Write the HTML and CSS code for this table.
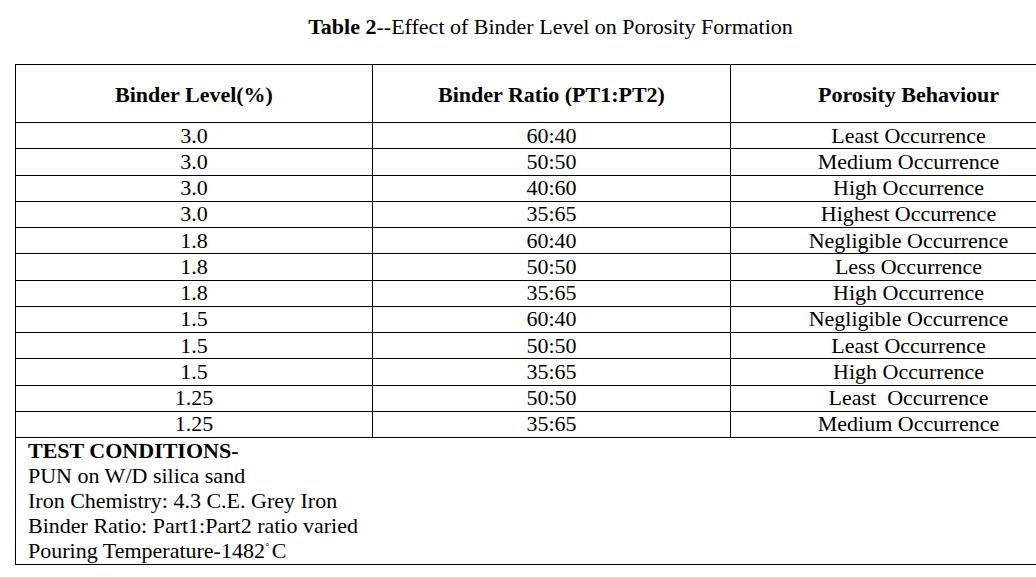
FILE: index.html
```html
<!DOCTYPE html>
<html>
<head>
<meta charset="utf-8">
<link rel="stylesheet" href="styles.css">
</head>
<body>
<div class="page">
  <h1 class="title"><b>Table 2</b>--Effect of Binder Level on Porosity Formation</h1>
  <table class="data">
    <colgroup><col class="c1"><col class="c2"><col class="c3"></colgroup>
    <thead>
      <tr class="head"><th>Binder Level(%)</th><th>Binder Ratio (PT1:PT2)</th><th>Porosity Behaviour</th></tr>
    </thead>
    <tbody>
      <tr><td>3.0</td><td>60:40</td><td>Least Occurrence</td></tr>
      <tr><td>3.0</td><td>50:50</td><td>Medium Occurrence</td></tr>
      <tr><td>3.0</td><td>40:60</td><td>High Occurrence</td></tr>
      <tr><td>3.0</td><td>35:65</td><td>Highest Occurrence</td></tr>
      <tr><td>1.8</td><td>60:40</td><td>Negligible Occurrence</td></tr>
      <tr><td>1.8</td><td>50:50</td><td>Less Occurrence</td></tr>
      <tr><td>1.8</td><td>35:65</td><td>High Occurrence</td></tr>
      <tr><td>1.5</td><td>60:40</td><td>Negligible Occurrence</td></tr>
      <tr><td>1.5</td><td>50:50</td><td>Least Occurrence</td></tr>
      <tr><td>1.5</td><td>35:65</td><td>High Occurrence</td></tr>
      <tr><td>1.25</td><td>50:50</td><td>Least&nbsp; Occurrence</td></tr>
      <tr><td>1.25</td><td>35:65</td><td>Medium Occurrence</td></tr>
      <tr class="cond">
        <td colspan="3">
          <div class="cond-title">TEST CONDITIONS-</div>
          <div>PUN on W/D silica sand</div>
          <div>Iron Chemistry: 4.3 C.E. Grey Iron</div>
          <div>Binder Ratio: Part1:Part2 ratio varied</div>
          <div>Pouring Temperature-1482<span class="deg">˚</span>C</div>
        </td>
      </tr>
    </tbody>
  </table>
</div>
</body>
</html>
```
FILE: styles.css
```css
html, body {
  margin: 0;
  padding: 0;
  overflow: hidden;
  background: #fff;
}
body {
  font-family: "Liberation Serif", "Times New Roman", serif;
  color: #000;
  font-size: 22px;
}
.page {
  width: 1071px;
  margin-left: 15px;
  padding-top: 14px;
}
.title {
  margin: 0 0 24px 0;
  font-size: 22px;
  font-weight: normal;
  line-height: 26px;
  text-align: center;
}
.data {
  width: 1071px;
  border-collapse: collapse;
  table-layout: fixed;
}
.c1 { width: 357px; }
.c2 { width: 358px; }
.c3 { width: 356px; }
.data th, .data td {
  border: 1px solid #000;
  padding: 0;
  text-align: center;
  vertical-align: middle;
  line-height: 24px;
}
.head th {
  height: 54px;
  font-weight: bold;
  padding-top: 3px;
}
.data tbody td {
  height: 25.25px;
}
.data .cond td {
  height: auto;
  text-align: left;
  padding: 0 0 1px 12px;
  line-height: 25px;
  vertical-align: top;
}
.cond-title {
  font-weight: bold;
}
.deg {
  font-size: 14px;
  line-height: 1;
  vertical-align: 4px;
  margin-right: 2px;
}
```
